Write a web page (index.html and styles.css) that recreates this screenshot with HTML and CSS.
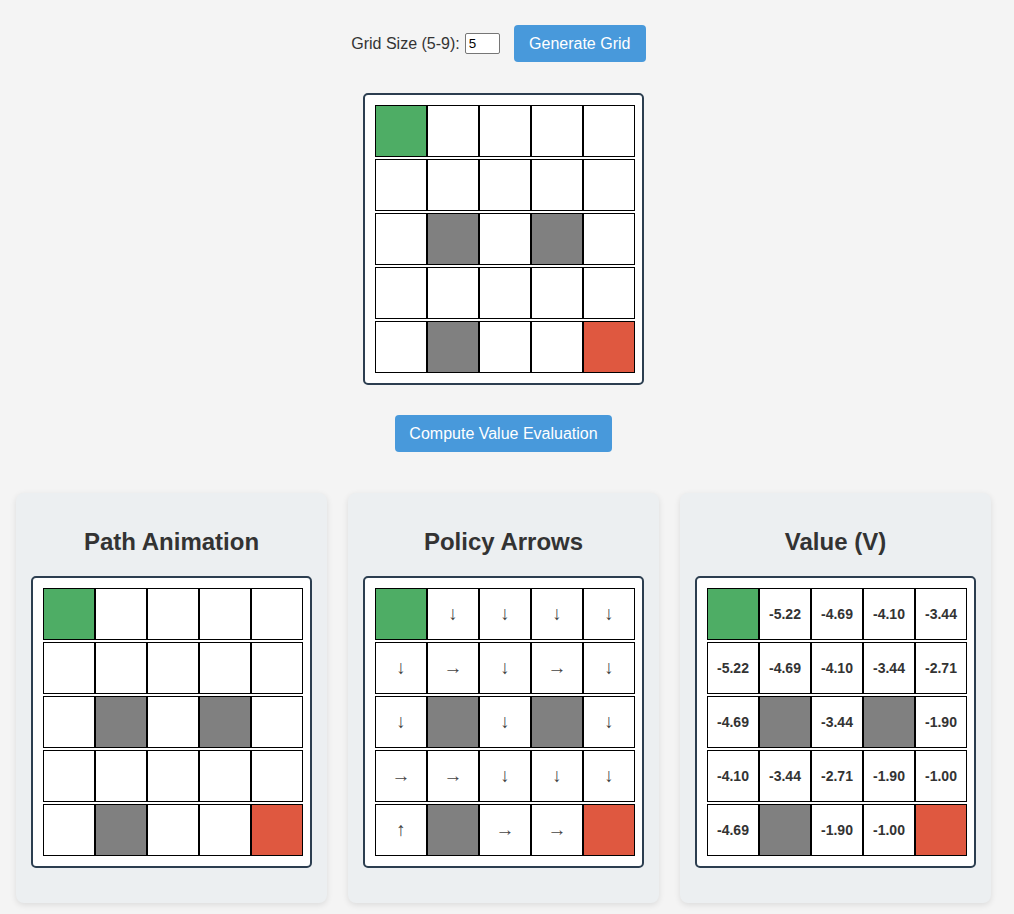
FILE: index.html
```html
<!DOCTYPE html>
<html lang="en">
<head>
<meta charset="utf-8">
<title>Grid World Value Evaluation</title>
<link rel="stylesheet" href="styles.css">
</head>
<body>
<div class="page">
  <div class="controls">
    <label class="size-label" for="gridSize">Grid Size (5-9):</label>
    <input class="size-input" id="gridSize" type="text" value="5">
    <button class="btn btn-generate">Generate Grid</button>
  </div>

  <div class="grid-box main-grid">
    <div class="row"><div class="cell start"></div><div class="cell"></div><div class="cell"></div><div class="cell"></div><div class="cell"></div></div>
    <div class="row"><div class="cell"></div><div class="cell"></div><div class="cell"></div><div class="cell"></div><div class="cell"></div></div>
    <div class="row"><div class="cell"></div><div class="cell wall"></div><div class="cell"></div><div class="cell wall"></div><div class="cell"></div></div>
    <div class="row"><div class="cell"></div><div class="cell"></div><div class="cell"></div><div class="cell"></div><div class="cell"></div></div>
    <div class="row"><div class="cell"></div><div class="cell wall"></div><div class="cell"></div><div class="cell"></div><div class="cell goal"></div></div>
  </div>

  <button class="btn btn-compute">Compute Value Evaluation</button>

  <div class="panels">
    <div class="panel">
      <h2 class="panel-title">Path Animation</h2>
      <div class="grid-box">
        <div class="row"><div class="cell start"></div><div class="cell"></div><div class="cell"></div><div class="cell"></div><div class="cell"></div></div>
        <div class="row"><div class="cell"></div><div class="cell"></div><div class="cell"></div><div class="cell"></div><div class="cell"></div></div>
        <div class="row"><div class="cell"></div><div class="cell wall"></div><div class="cell"></div><div class="cell wall"></div><div class="cell"></div></div>
        <div class="row"><div class="cell"></div><div class="cell"></div><div class="cell"></div><div class="cell"></div><div class="cell"></div></div>
        <div class="row"><div class="cell"></div><div class="cell wall"></div><div class="cell"></div><div class="cell"></div><div class="cell goal"></div></div>
      </div>
    </div>

    <div class="panel">
      <h2 class="panel-title">Policy Arrows</h2>
      <div class="grid-box arrows">
        <div class="row"><div class="cell start"></div><div class="cell">↓</div><div class="cell">↓</div><div class="cell">↓</div><div class="cell">↓</div></div>
        <div class="row"><div class="cell">↓</div><div class="cell">→</div><div class="cell">↓</div><div class="cell">→</div><div class="cell">↓</div></div>
        <div class="row"><div class="cell">↓</div><div class="cell wall"></div><div class="cell">↓</div><div class="cell wall"></div><div class="cell">↓</div></div>
        <div class="row"><div class="cell">→</div><div class="cell">→</div><div class="cell">↓</div><div class="cell">↓</div><div class="cell">↓</div></div>
        <div class="row"><div class="cell">↑</div><div class="cell wall"></div><div class="cell">→</div><div class="cell">→</div><div class="cell goal"></div></div>
      </div>
    </div>

    <div class="panel">
      <h2 class="panel-title">Value (V)</h2>
      <div class="grid-box values">
        <div class="row"><div class="cell start"></div><div class="cell">-5.22</div><div class="cell">-4.69</div><div class="cell">-4.10</div><div class="cell">-3.44</div></div>
        <div class="row"><div class="cell">-5.22</div><div class="cell">-4.69</div><div class="cell">-4.10</div><div class="cell">-3.44</div><div class="cell">-2.71</div></div>
        <div class="row"><div class="cell">-4.69</div><div class="cell wall"></div><div class="cell">-3.44</div><div class="cell wall"></div><div class="cell">-1.90</div></div>
        <div class="row"><div class="cell">-4.10</div><div class="cell">-3.44</div><div class="cell">-2.71</div><div class="cell">-1.90</div><div class="cell">-1.00</div></div>
        <div class="row"><div class="cell">-4.69</div><div class="cell wall"></div><div class="cell">-1.90</div><div class="cell">-1.00</div><div class="cell goal"></div></div>
      </div>
    </div>
  </div>
</div>
</body>
</html>
```

FILE: styles.css
```css
html, body {
  margin: 0;
  padding: 0;
}

body {
  background: #f4f4f4;
  font-family: "Liberation Sans", Arial, Helvetica, sans-serif;
  color: #333;
}

.page {
  width: 1007px;
  padding-top: 25px;
  padding-bottom: 20px;
  display: flex;
  flex-direction: column;
  align-items: center;
}

.controls {
  display: flex;
  align-items: center;
  height: 37px;
}

.size-label {
  font-size: 16px;
  color: #333;
  margin-right: 5px;
}

.size-input {
  box-sizing: border-box;
  width: 35px;
  height: 21px;
  border: 1px solid #767676;
  border-radius: 2px;
  padding: 1px 3px;
  font-family: "Liberation Sans", Arial, sans-serif;
  font-size: 13.33px;
  color: #000;
  background: #fff;
}

.btn {
  box-sizing: border-box;
  background: #4899db;
  color: #fff;
  border: none;
  border-radius: 4px;
  font-family: "Liberation Sans", Arial, Helvetica, sans-serif;
  font-size: 16px;
  height: 37px;
  line-height: 17px;
  padding: 10px 0;
  white-space: nowrap;
  text-align: center;
  cursor: pointer;
}

.btn-generate {
  width: 132px;
  margin: 0 10px 0 14px;
}

.btn-compute {
  width: 217px;
  margin-top: 30px;
}

.grid-box {
  box-sizing: border-box;
  width: 281px;
  background: #fff;
  border: 2px solid #2c3e50;
  border-radius: 5px;
  padding: 10px 7px 10px 10px;
  display: flex;
  flex-direction: column;
  gap: 2px;
}

.main-grid {
  margin-top: 31px;
}

.row {
  display: flex;
}

.cell {
  box-sizing: border-box;
  width: 52px;
  height: 52px;
  border: 1px solid #000;
  background: #fff;
  display: flex;
  align-items: center;
  justify-content: center;
  color: #333;
}

.cell.start {
  background: #4ead65;
}

.cell.goal {
  background: #df5840;
}

.cell.wall {
  background: #808080;
}

.arrows .cell {
  font-family: "Liberation Sans", Arial, sans-serif;
  font-size: 19px;
  color: #444;
}

.values .cell {
  font-size: 14px;
  font-weight: bold;
}

.panels {
  margin-top: 41px;
  display: flex;
  gap: 21px;
}

.panel {
  box-sizing: border-box;
  width: 311px;
  background: #eceff1;
  border-radius: 8px;
  box-shadow: 0 2px 6px rgba(0, 0, 0, 0.1);
  padding: 15px 15px 35px 15px;
  display: flex;
  flex-direction: column;
  align-items: center;
}

.panel-title {
  font-size: 24px;
  font-weight: bold;
  margin: 20px 0;
  color: #333;
  text-align: center;
}
```
